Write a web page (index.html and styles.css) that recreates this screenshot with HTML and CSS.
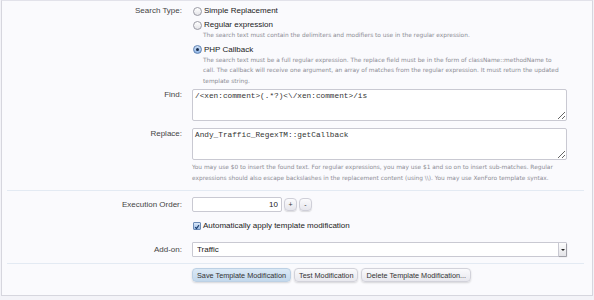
FILE: index.html
```html
<!DOCTYPE html>
<html lang="en">
<head>
    <meta charset="UTF-8">
    <title>Template Modification</title>
    <link rel="stylesheet" href="styles.css">
</head>
<body>
    <form class="panel">
        <div class="unit unit-search">
            <div class="unit-label">Search Type:</div>
            <ul class="choices">
                <li>
                    <label class="choice"><span class="radio"></span>Simple Replacement</label>
                </li>
                <li>
                    <label class="choice"><span class="radio"></span>Regular expression</label>
                    <p class="explain">The search text must contain the delimiters and modifiers to use in the regular expression.</p>
                </li>
                <li>
                    <label class="choice"><span class="radio checked"></span>PHP Callback</label>
                    <p class="explain">The search text must be a full regular expression. The replace field must be in the form of className::methodName to<br>call. The callback will receive one argument, an array of matches from the regular expression. It must return the updated template string.</p>
                </li>
            </ul>
        </div>

        <div class="unit unit-find">
            <label class="unit-label" for="find">Find:</label>
            <textarea id="find" class="code-box">/&lt;xen:comment&gt;(.*?)&lt;\/xen:comment&gt;/is</textarea>
        </div>

        <div class="unit unit-replace">
            <label class="unit-label" for="replace">Replace:</label>
            <div>
                <textarea id="replace" class="code-box">Andy_Traffic_RegexTM::getCallback</textarea>
                <p class="help">You may use $0 to insert the found text. For regular expressions, you may use $1 and so on to insert sub-matches. Regular expressions should also escape backslashes in the replacement content (using \\). You may use XenForo template syntax.</p>
            </div>
        </div>

        <hr class="sep">

        <div class="unit unit-order">
            <label class="unit-label" for="order">Execution Order:</label>
            <div class="spinner">
                <input id="order" class="text-box num" type="text" value="10">
                <button type="button" class="spin">+</button>
                <button type="button" class="spin">-</button>
            </div>
        </div>

        <div class="unit unit-check">
            <div class="unit-label"></div>
            <label class="choice"><span class="check"><svg viewBox="0 0 8 8" width="8" height="8"><path d="M1.6 4.2 L3.3 6 L6.6 1.4" fill="none" stroke="#1d3f6e" stroke-width="1.5"/></svg></span>Automatically apply template modification</label>
        </div>

        <div class="unit unit-addon">
            <label class="unit-label" for="addon">Add-on:</label>
            <div class="select-box">
                <select id="addon"><option>Traffic</option></select>
                <span class="select-arrow"></span>
            </div>
        </div>

        <hr class="sep">

        <div class="unit unit-submit">
            <div class="unit-label"></div>
            <div class="buttons">
                <button type="button" class="btn primary">Save Template Modification</button>
                <button type="button" class="btn">Test Modification</button>
                <button type="button" class="btn">Delete Template Modification...</button>
            </div>
        </div>
    </form>
</body>
</html>
```

FILE: styles.css
```css
* {
    margin: 0;
    padding: 0;
    box-sizing: border-box;
}

body {
    background-color: #f3f3f8;
    font-family: 'Liberation Sans', Arial, sans-serif;
    color: #333;
}

.panel {
    width: 592px;
    margin-left: 1px;
    padding: 5px 0 13px;
    background-color: #fafafd;
    border: 1px solid #d6d6de;
    border-top-color: #e2e2ea;
}

.unit {
    display: grid;
    grid-template-columns: 180px 375px;
    column-gap: 10px;
}

.unit-label {
    text-align: right;
    font-size: 8px;
    line-height: 10px;
    color: #444;
}

.choices {
    list-style: none;
}

.choices li + li {
    margin-top: 4px;
}

.choice {
    display: flex;
    align-items: center;
    font-size: 8px;
    line-height: 10px;
    color: #222;
}

.radio {
    width: 9px;
    height: 9px;
    margin: 0 2px 0 1px;
    border: 1px solid #9a9aa4;
    border-radius: 50%;
    background: linear-gradient(#fff, #e4e4e8);
    display: flex;
    align-items: center;
    justify-content: center;
}

.radio.checked {
    border-color: #5f83b4;
    background: linear-gradient(#cfe0f6, #8fb4e4);
}

.radio.checked::after {
    content: '';
    width: 3px;
    height: 3px;
    border-radius: 50%;
    background: #1b2f4f;
}

.explain {
    margin-left: 11px;
    width: 364px;
    font-family: 'DejaVu Sans', Verdana, sans-serif;
    font-size: 5.85px;
    line-height: 10.5px;
    color: #8c8c94;
}

.unit-find {
    margin-top: 3px;
}

.unit-find .unit-label,
.unit-replace .unit-label {
    padding-top: 1px;
}

.code-box {
    display: block;
    width: 375px;
    height: 32px;
    padding: 1px 2px;
    border: 1px solid #c9c9d2;
    border-radius: 2px;
    background: #fff;
    font-family: 'Liberation Mono', 'Courier New', monospace;
    font-size: 7.75px;
    line-height: 10px;
    color: #333;
    outline: none;
}

.unit-replace {
    margin-top: 7px;
}

.help {
    margin-top: 2px;
    font-family: 'DejaVu Sans', Verdana, sans-serif;
    font-size: 5.85px;
    line-height: 11px;
    color: #8c8c94;
}

.sep {
    margin: 6px 8px 0 5px;
    border: none;
    border-top: 1px solid #e3eaf3;
}

.unit-order {
    margin-top: 6px;
    align-items: center;
}

.spinner {
    display: flex;
    align-items: center;
    gap: 2px;
}

.text-box {
    height: 15px;
    border: 1px solid #c9c9d2;
    border-radius: 2px;
    background: #fff;
    font-family: inherit;
    font-size: 8px;
    color: #222;
    outline: none;
}

.num {
    width: 90px;
    padding: 0 3px;
    text-align: right;
}

.spin {
    width: 13px;
    height: 13px;
    border: 1px solid #cfcfd8;
    border-radius: 4px;
    background: linear-gradient(#fbfbfd, #e6e6ec);
    box-shadow: 0 1px 1px rgba(0, 0, 0, 0.12);
    font-family: inherit;
    font-size: 7px;
    line-height: 10px;
    color: #333;
}

.unit-check {
    margin-top: 9px;
}

.check {
    width: 8px;
    height: 8px;
    margin: 0 2px 0 1px;
    border: 1px solid #6c8bb6;
    border-radius: 1px;
    background: linear-gradient(#dbe8f8, #9dbde6);
    display: flex;
}

.unit-addon {
    margin-top: 11px;
    align-items: center;
}

.select-box {
    display: flex;
    height: 15px;
    border: 1px solid #c9c9d2;
    border-radius: 1px;
    background: #fff;
}

.select-box select {
    flex: 1;
    appearance: none;
    border: none;
    background: none;
    padding: 0 4px;
    font-family: inherit;
    font-size: 8px;
    color: #222;
    outline: none;
}

.select-arrow {
    width: 8px;
    border-left: 1px solid #c9c9d2;
    background: linear-gradient(#fdfdfd, #e4e4e8);
    box-shadow: 1px 1px 1px rgba(0, 0, 0, 0.2);
    display: flex;
    align-items: center;
    justify-content: center;
}

.select-arrow::after {
    content: '';
    border-left: 2px solid transparent;
    border-right: 2px solid transparent;
    border-top: 2px solid #222;
}

.unit-submit {
    margin-top: 4px;
}

.buttons {
    display: flex;
    gap: 3px;
}

.btn {
    height: 14px;
    padding: 0 4px;
    border: 1px solid #d2d2da;
    border-radius: 4px;
    background: linear-gradient(#fafafc, #e8e8ee);
    box-shadow: 0 1px 2px rgba(0, 0, 0, 0.15);
    font-family: inherit;
    font-size: 7.3px;
    color: #333;
}

.btn.primary {
    border-color: #bcd0e4;
    background: linear-gradient(#dbe9f6, #c3d8ec);
}
```
